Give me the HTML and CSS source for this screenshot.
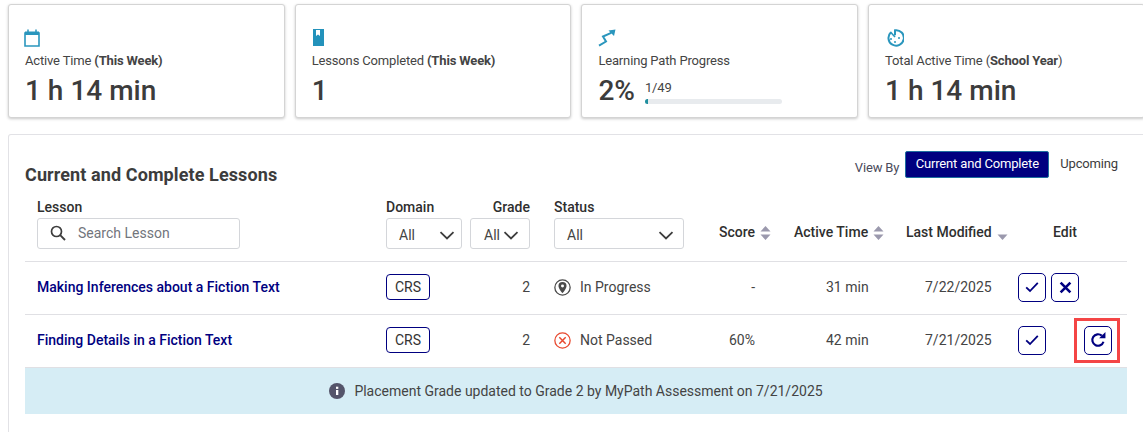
FILE: index.html
```html
<!DOCTYPE html>
<html lang="en">
<head>
<meta charset="utf-8">
<title>Lessons</title>
<link rel="stylesheet" href="styles.css">
</head>
<body>
<div class="page">
  <section class="cards">
    <article class="card">
      <svg class="icon icon-cal" width="16" height="18" viewBox="0 0 16 18"><path d="M1 4h14v13H1z" fill="none" stroke="#2a96bd" stroke-width="1.6"/><path d="M1 2.5h14V6H1z" fill="#2a96bd"/><path d="M4 0.5v3M12 0.5v3" stroke="#2a96bd" stroke-width="1.5"/></svg>
      <p class="label">Active Time <b>(This Week)</b></p>
      <p class="value">1 h 14 min</p>
    </article>
    <article class="card">
      <svg class="icon icon-book" width="12" height="18" viewBox="0 0 12 18"><path d="M0 0h11v17H0z" fill="#2392bb"/><path d="M3 1h4v6L5 5.5 3 7z" fill="#fff"/></svg>
      <p class="label">Lessons Completed <b>(This Week)</b></p>
      <p class="value">1</p>
    </article>
    <article class="card">
      <svg class="icon" width="18" height="18" viewBox="0 0 18 18"><path d="M1 16.700 8 12.500 5 7.500 12 4.500 14 3" fill="none" stroke="#2a96bd" stroke-width="2"/><path d="M10.500 1.500 17.500.5 16 7z" fill="#2a96bd"/></svg>
      <p class="label">Learning Path Progress</p>
      <div class="progress-line">
        <p class="value">2%</p>
        <div class="progress">
          <span class="count">1/49</span>
          <div class="track"><div class="fill" style="width:2%"></div></div>
        </div>
      </div>
    </article>
    <article class="card">
      <svg class="icon icon-clock" width="18" height="18" viewBox="0 0 18 18"><path d="M5 3.200A7.700 7.700 0 1 0 9 1.300v5" fill="none" stroke="#2a96bd" stroke-width="2"/><path d="M4.500 3 9 8" stroke="#2a96bd" stroke-width="1.600"/><circle cx="13" cy="9" r="1" fill="#2a96bd"/><circle cx="9" cy="13" r="1" fill="#2a96bd"/><circle cx="5" cy="10" r="1" fill="#2a96bd"/></svg>
      <p class="label">Total Active Time (<b>School Year</b>)</p>
      <p class="value">1 h 14 min</p>
    </article>
  </section>

  <section class="panel">
    <header class="panel-head">
      <h2 class="title">Current and Complete Lessons</h2>
      <div class="view-by">
        <span class="view-label">View By</span>
        <button class="tab tab-on">Current and Complete</button>
        <button class="tab">Upcoming</button>
      </div>
    </header>

    <div class="grid grid-head">
      <div class="col col-lesson">
        <span class="th">Lesson</span>
        <div class="search">
          <svg width="16" height="16" viewBox="0 0 16 16"><circle cx="6.500" cy="6.500" r="5" fill="none" stroke="#3d3d3d" stroke-width="1.700"/><path d="M10.200 10.200 15 15" stroke="#3d3d3d" stroke-width="1.900"/></svg>
          <span class="placeholder">Search Lesson</span>
        </div>
      </div>
      <div class="col">
        <span class="th">Domain</span>
        <div class="select select-domain"><span>All</span><svg class="chev" width="16" height="9" viewBox="0 0 16 9"><path d="M1.500 1.200 8 7.500l6.500-6.300" fill="none" stroke="#3d3d3d" stroke-width="1.800"/></svg></div>
      </div>
      <div class="col">
        <span class="th th-grade">Grade</span>
        <div class="select select-grade"><span>All</span><svg class="chev" width="16" height="9" viewBox="0 0 16 9"><path d="M1.500 1.200 8 7.500l6.500-6.300" fill="none" stroke="#3d3d3d" stroke-width="1.800"/></svg></div>
      </div>
      <div class="col">
        <span class="th">Status</span>
        <div class="select select-status"><span>All</span><svg class="chev" width="16" height="9" viewBox="0 0 16 9"><path d="M1.500 1.200 8 7.500l6.500-6.300" fill="none" stroke="#3d3d3d" stroke-width="1.800"/></svg></div>
      </div>
      <div class="sort sort-score"><span class="th">Score</span><svg width="11" height="16" viewBox="0 0 11 16"><path d="M5.500 1 10.500 6.500H.5zM.5 9.500h10L5.500 15z" fill="#9b99ad"/></svg></div>
      <div class="sort sort-time"><span class="th">Active Time</span><svg width="11" height="16" viewBox="0 0 11 16"><path d="M5.500 1 10.500 6.500H.5zM.5 9.500h10L5.500 15z" fill="#9b99ad"/></svg></div>
      <div class="sort sort-mod"><span class="th">Last Modified</span><svg width="11" height="16" viewBox="0 0 11 16"><path d="M.5 9.500h10L5.500 15z" fill="#9b99ad"/></svg></div>
      <div class="sort sort-edit"><span class="th">Edit</span></div>
    </div>

    <div class="grid row">
      <a class="lesson">Making Inferences about a Fiction Text</a>
      <div><span class="badge">CRS</span></div>
      <div class="num">2</div>
      <div class="status">
        <svg width="17" height="17" viewBox="0 0 16 16"><circle cx="8" cy="8" r="7.200" fill="none" stroke="#4a4a4a" stroke-width="1.200"/><path d="M8 2.800a3.800 3.800 0 0 0-3.800 3.800C4.200 9.200 8 13.400 8 13.400s3.800-4.200 3.800-6.800A3.800 3.800 0 0 0 8 2.800z" fill="#4a4a4a"/><circle cx="8" cy="6.500" r="1.400" fill="#fff"/></svg>
        <span>In Progress</span>
      </div>
      <div class="score">-</div>
      <div class="time">31 min</div>
      <div class="date">7/22/2025</div>
      <div class="actions">
        <button class="act"><svg width="14" height="12" viewBox="0 0 14 12"><path d="M1.200 6.300 5 10 12.800 1.800" fill="none" stroke="#000080" stroke-width="1.800"/></svg></button>
        <button class="act"><svg width="13" height="13" viewBox="0 0 12 12"><path d="M1.500 1.500l9 9M10.500 1.500l-9 9" fill="none" stroke="#000080" stroke-width="2.400"/></svg></button>
      </div>
    </div>

    <div class="grid row">
      <a class="lesson">Finding Details in a Fiction Text</a>
      <div><span class="badge">CRS</span></div>
      <div class="num">2</div>
      <div class="status">
        <svg width="17" height="17" viewBox="0 0 16 16"><circle cx="8" cy="8" r="7.200" fill="none" stroke="#e8492f" stroke-width="1.200"/><path d="M5 5l6 6M11 5l-6 6" fill="none" stroke="#e8492f" stroke-width="1.400"/></svg>
        <span>Not Passed</span>
      </div>
      <div class="score">60%</div>
      <div class="time">42 min</div>
      <div class="date">7/21/2025</div>
      <div class="actions">
        <button class="act"><svg width="14" height="12" viewBox="0 0 14 12"><path d="M1.200 6.300 5 10 12.800 1.800" fill="none" stroke="#000080" stroke-width="1.800"/></svg></button>
        <div class="redo">
          <button class="act"><svg width="16" height="16" viewBox="0 0 14 14"><path d="M11.800 8.500A5 5 0 1 1 10.300 3.200" fill="none" stroke="#000080" stroke-width="1.900"/><path d="M8 5.500h5.500V0z" fill="#000080"/></svg></button>
        </div>
      </div>
    </div>

    <div class="banner">
      <svg width="16" height="16" viewBox="0 0 16 16"><circle cx="8" cy="8" r="8" fill="#54546a"/><rect x="7" y="7" width="2.300" height="5" fill="#fff"/><rect x="7" y="3.700" width="2.300" height="2.200" fill="#fff"/></svg>
      <span class="banner-text">Placement Grade updated to Grade 2 by MyPath Assessment on 7/21/2025</span>
    </div>
  </section>
</div>
</body>
</html>
```

FILE: styles.css
```css
* { box-sizing: border-box; }
html, body { margin: 0; padding: 0; background: #fff; }
body { width: 1143px; height: 432px; overflow: hidden; font-family: Roboto, "Liberation Sans", sans-serif; color: #3c3c3c; font-size: 14px; }
p { margin: 0; }
b { font-weight: 700; }

.page { padding: 4px 0 0 8px; width: 1143px; height: 432px; overflow: hidden; }

.cards { display: grid; grid-template-columns: repeat(4, 276.500px); column-gap: 10.200px; }
.card { height: 114px; background: #fff; border: 1px solid #d4d4d4; border-radius: 3px; box-shadow: 0 1px 3px rgba(0,0,0,.22); padding: 24px 16px 0; display: flex; flex-direction: column; }
.icon { display: block; height: 18px; flex: none; }
.icon-cal { margin-left: -1px; }
.icon-book { margin-left: 1px; }
.icon-clock { margin-left: 1px; }
.label { margin-top: 5px; height: 18px; font-size: 13px; line-height: 18px; color: #444; letter-spacing: -.16px; }
.value { font-size: 28px; font-weight: 500; line-height: 34px; color: #3c3c3c; margin-top: 4px; }

.progress-line { display: flex; align-items: flex-start; gap: 10px; }
.progress { width: 137px; padding-top: 10px; }
.count { display: block; font-size: 13px; line-height: 16px; color: #444; letter-spacing: -.16px; }
.track { height: 5px; margin-top: 3px; border-radius: 3px; background: #e8ebee; overflow: hidden; }
.fill { height: 100%; background: #1f8f9f; }

.panel { margin-top: 16px; width: 1150px; height: 298px; border: 1px solid #e2e2e6; border-bottom: 0; border-radius: 3px 3px 0 0; padding: 0 0 0 16px; }
.panel-head { width: 1102px; height: 64px; display: flex; justify-content: space-between; align-items: flex-start; }
.title { margin: 29px 0 0; font-size: 18px; line-height: 22px; font-weight: 700; color: #3c3c3c; letter-spacing: .1px; }
.view-by { display: flex; align-items: flex-start; margin-top: 16px; }
.view-label { font-size: 13px; line-height: 18px; margin: 8px 6px 0 0; color: #4a4a5a; letter-spacing: -.16px; }
.tab { height: 27px; border: 0; background: none; font: 13px/17px Roboto, sans-serif; color: #3c3c3c; padding: 0 9px 3px 11px; letter-spacing: -.16px; }
.tab-on { width: 144px; background: #000080; color: #fff; border: 1px solid #1f6f9f; border-radius: 2px; padding: 0 0 3px; }

.grid { display: grid; width: 1102px; grid-template-columns: 361px 84px 84px 154px 74px 118px 118px 109px; }
.grid-head { height: 63px; border-bottom: 1px solid #e0e0e4; align-items: flex-start; }
.col { display: flex; flex-direction: column; }
.col-lesson { padding-left: 12px; }
.th { font-size: 14px; line-height: 17px; font-weight: 500; color: #2f2f2f; }
.th-grade { width: 60px; text-align: right; }
.search { margin-top: 2px; width: 203px; height: 31px; border: 1px solid #d4d6da; border-radius: 3px; display: flex; align-items: center; padding: 0 0 1px 12px; gap: 12px; }
.placeholder { color: #72757c; font-size: 14px; }
.select { margin-top: 2px; height: 31px; border: 1px solid #d4d6da; border-radius: 3px; display: flex; align-items: center; justify-content: space-between; padding: 3px 6px 0 12px; font-size: 14px; color: #444; }
.select-domain { width: 76px; }
.select-grade { width: 60px; padding-left: 13px; padding-right: 10px; }
.select-status { width: 130px; padding-right: 9px; }
.sort { display: flex; align-items: center; gap: 5px; margin-top: 25px; height: 17px; }
.sort-score { margin-left: 11px; }
.sort-time { margin-left: 12px; }
.sort-mod { margin-left: 6px; }
.sort-edit { margin-left: 35px; }

.row { height: 53px; padding-bottom: 2px; border-bottom: 1px solid #e0e0e4; align-items: center; font-size: 14px; color: #444; }
.lesson { padding-left: 12px; color: #000080; font-weight: 500; font-size: 14px; }
.badge { display: inline-flex; align-items: center; justify-content: center; width: 44px; height: 26px; border: 1px solid #000080; border-radius: 4px; color: #333; }
.num { width: 60px; margin-left: 0; text-align: right; padding-right: 0; }
.status { display: flex; align-items: center; gap: 9px; }
.score { width: 46px; text-align: right; margin-left: 1px; }
.time { padding-left: 44px; }
.date { padding-left: 25px; }
.actions { display: flex; gap: 5px; align-items: center; }
.act { width: 28px; height: 29px; padding: 0; border: 1px solid #000080; border-radius: 5px; background: #fff; display: inline-flex; align-items: center; justify-content: center; }
.redo { margin-left: 33px; position: relative; display: flex; }
.redo::after { content: ""; box-sizing: border-box; position: absolute; left: -10px; top: -8px; width: 46px; height: 45px; border: 3px solid #f44545; pointer-events: none; }

.banner { width: 1102px; height: 46px; background: #d6edf5; display: flex; align-items: center; justify-content: center; gap: 9px; font-size: 14px; color: #444; }
.banner-text { margin-bottom: 1px; }
```
